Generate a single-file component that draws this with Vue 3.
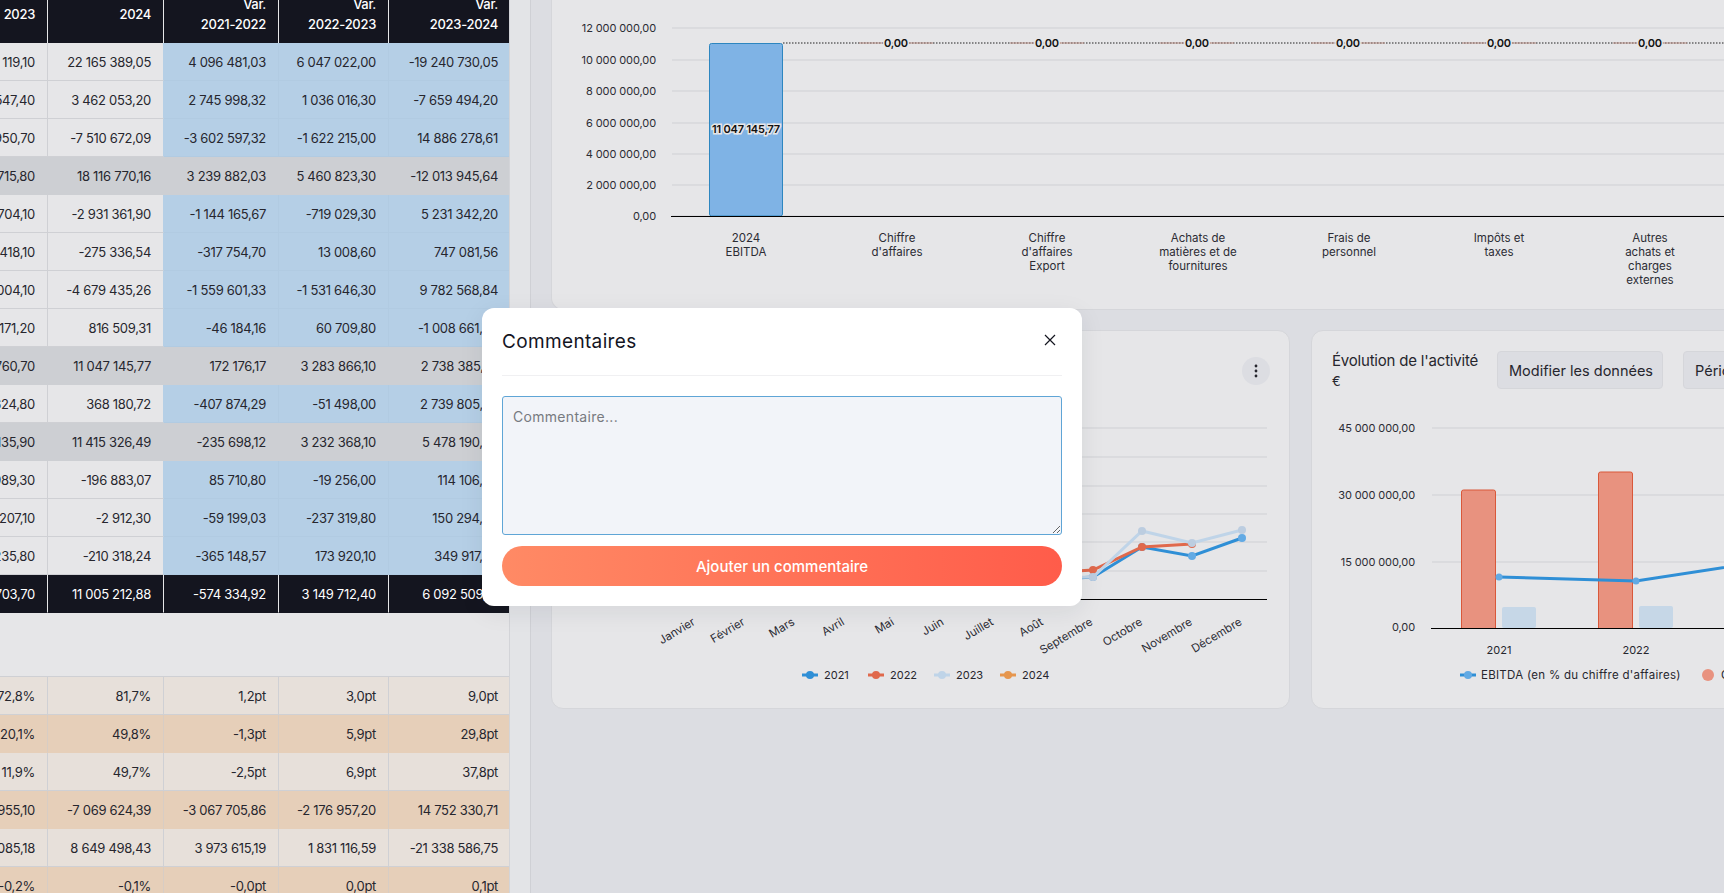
<script setup>
// lignes du tableau : 2023, 2024, var. 21-22, var. 22-23, var. 23-24
const mainRows = [
  { type: 'line', cells: ['41 406 119,10', '22 165 389,05', '4 096 481,03', '6 047 022,00', '-19 240 730,05'] },
  { type: 'line', cells: ['11 121 547,40', '3 462 053,20', '2 745 998,32', '1 036 016,30', '-7 659 494,20'] },
  { type: 'line', cells: ['-22 396 950,70', '-7 510 672,09', '-3 602 597,32', '-1 622 215,00', '14 886 278,61'] },
  { type: 'total', cells: ['30 130 715,80', '18 116 770,16', '3 239 882,03', '5 460 823,30', '-12 013 945,64'] },
  { type: 'line', cells: ['-8 162 704,10', '-2 931 361,90', '-1 144 165,67', '-719 029,30', '5 231 342,20'] },
  { type: 'line', cells: ['-1 022 418,10', '-275 336,54', '-317 754,70', '13 008,60', '747 081,56'] },
  { type: 'line', cells: ['-14 462 004,10', '-4 679 435,26', '-1 559 601,33', '-1 531 646,30', '9 782 568,84'] },
  { type: 'line', cells: ['1 825 171,20', '816 509,31', '-46 184,16', '60 709,80', '-1 008 661,89'] },
  { type: 'total', cells: ['8 308 760,70', '11 047 145,77', '172 176,17', '3 283 866,10', '2 738 385,07'] },
  { type: 'line', cells: ['-2 371 624,80', '368 180,72', '-407 874,29', '-51 498,00', '2 739 805,52'] },
  { type: 'total', cells: ['5 937 135,90', '11 415 326,49', '-235 698,12', '3 232 368,10', '5 478 190,59'] },
  { type: 'line', cells: ['-310 989,30', '-196 883,07', '85 710,80', '-19 256,00', '114 106,23'] },
  { type: 'line', cells: ['-153 207,10', '-2 912,30', '-59 199,03', '-237 319,80', '150 294,80'] },
  { type: 'line', cells: ['-560 235,80', '-210 318,24', '-365 148,57', '173 920,10', '349 917,56'] },
  { type: 'result', cells: ['4 912 703,70', '11 005 212,88', '-574 334,92', '3 149 712,40', '6 092 509,18'] }
]

const ratioRows = [
  ['72,8%', '81,7%', '1,2pt', '3,0pt', '9,0pt'],
  ['20,1%', '49,8%', '-1,3pt', '5,9pt', '29,8pt'],
  ['11,9%', '49,7%', '-2,5pt', '6,9pt', '37,8pt'],
  ['-21 821 955,10', '-7 069 624,39', '-3 067 705,86', '-2 176 957,20', '14 752 330,71'],
  ['29 988 085,18', '8 649 498,43', '3 973 615,19', '1 831 116,59', '-21 338 586,75'],
  ['-0,2%', '-0,1%', '-0,0pt', '0,0pt', '0,1pt']
]

// graphique du haut
const topGrid = [
  { y: 28, label: '12 000 000,00' },
  { y: 60, label: '10 000 000,00' },
  { y: 91, label: '8 000 000,00' },
  { y: 123, label: '6 000 000,00' },
  { y: 154, label: '4 000 000,00' },
  { y: 185, label: '2 000 000,00' },
  { y: 216, label: '0,00' }
]
const zeroLabels = [896, 1047, 1197, 1348, 1499, 1650]
const topCategories = [
  { x: 746, lines: ['2024', 'EBITDA'] },
  { x: 897, lines: ['Chiffre', "d'affaires"] },
  { x: 1047, lines: ['Chiffre', "d'affaires", 'Export'] },
  { x: 1198, lines: ['Achats de', 'matières et de', 'fournitures'] },
  { x: 1349, lines: ['Frais de', 'personnel'] },
  { x: 1499, lines: ['Impôts et', 'taxes'] },
  { x: 1650, lines: ['Autres', 'achats et', 'charges', 'externes'] }
]

// courbes mensuelles
const monthGrid = [428, 457, 486, 514, 542, 571]
const months = ['Janvier', 'Février', 'Mars', 'Avril', 'Mai', 'Juin', 'Juillet', 'Août', 'Septembre', 'Octobre', 'Novembre', 'Décembre']
const monthX = (i) => 696 + i * 49.7
const monthLines = [
  { color: '#2f8fd6', dot: '#62aae4', width: 3, points: [[1043, 580], [1093, 577], [1142, 547], [1192, 556], [1242, 538]] },
  { color: '#e0694c', dot: '#e0694c', width: 3, points: [[1043, 573], [1093, 570], [1142, 547], [1192, 544]] },
  { color: '#bfd4e8', dot: '#bccde0', width: 3, points: [[1043, 578], [1093, 577], [1142, 531], [1192, 543], [1242, 530]] }
]
const monthLegend = [
  { x: 810, color: '#2f8fd6', label: '2021' },
  { x: 876, color: '#e0694c', label: '2022' },
  { x: 942, color: '#bfd4e8', label: '2023' },
  { x: 1008, color: '#e6964e', label: '2024' }
]
const toPolyline = (points) => points.map((p) => p.join(',')).join(' ')

// évolution de l'activité
const activityGrid = [
  { y: 428, label: '45 000 000,00' },
  { y: 495, label: '30 000 000,00' },
  { y: 562, label: '15 000 000,00' }
]
const activityYears = [
  { label: '2021', x: 1499, redTop: 490, blueTop: 607 },
  { label: '2022', x: 1636, redTop: 472, blueTop: 606 }
]
</script>

<template>
  <div class="page">
    <!-- colonne du tableau, décalée comme après un défilement -->
    <section class="left">
      <div class="table-panel">
        <table class="grid head-table">
          <colgroup>
            <col class="c0" /><col class="c1" /><col class="c2" /><col class="c3" /><col class="c4" />
          </colgroup>
          <thead>
            <tr>
              <th>2023</th>
              <th>2024</th>
              <th>Var.<br />2021-2022</th>
              <th>Var.<br />2022-2023</th>
              <th>Var.<br />2023-2024</th>
            </tr>
          </thead>
          <tbody>
            <tr v-for="(row, i) in mainRows" :key="i" :class="row.type">
              <td v-for="(cell, j) in row.cells" :key="j">{{ cell }}</td>
            </tr>
          </tbody>
        </table>

        <table class="grid ratio-table">
          <colgroup>
            <col class="c0" /><col class="c1" /><col class="c2" /><col class="c3" /><col class="c4" />
          </colgroup>
          <tbody>
            <tr v-for="(row, i) in ratioRows" :key="i" :class="i % 2 ? 'tan-dark' : 'tan-light'">
              <td v-for="(cell, j) in row" :key="j">{{ cell }}</td>
            </tr>
          </tbody>
        </table>
      </div>
    </section>

    <section class="dash">
      <div class="card top-card">
        <svg class="chart" width="1172" height="309" viewBox="552 0 1172 309">
          <g v-for="g in topGrid" :key="g.y">
            <line class="grid-line" x1="672" :x2="1724" :y1="g.y" :y2="g.y" />
            <text class="tick" x="656" :y="g.y + 4" text-anchor="end">{{ g.label }}</text>
          </g>
          <line x1="783" x2="1724" y1="43" y2="43" stroke="#222" stroke-dasharray="1.5 1.5" />
          <line
            v-for="x in zeroLabels"
            :key="x"
            :x1="x - 37"
            :x2="x + 37"
            y1="43"
            y2="43"
            stroke="#b98f86"
          />
          <rect x="709.5" y="43.5" width="73" height="172.5" rx="2" fill="#7fb3e5" stroke="#2d86c0" />
          <line x1="671" x2="1724" y1="216.5" y2="216.5" stroke="#000" stroke-width="1.2" />
          <text class="value" x="746" y="133" text-anchor="middle">11 047 145,77</text>
          <text v-for="x in zeroLabels" :key="x" class="value" :x="x" y="47" text-anchor="middle">0,00</text>
          <g v-for="c in topCategories" :key="c.x">
            <text
              v-for="(line, i) in c.lines"
              :key="i"
              class="cat"
              :x="c.x"
              :y="242 + i * 14"
              text-anchor="middle"
            >{{ line }}</text>
          </g>
        </svg>
      </div>

      <div class="bottom-row">
        <div class="card month-card">
          <div class="card-head">
            <span class="card-title">Évolution mensuelle</span>
            <button class="kebab" aria-label="Options">
              <svg width="4" height="14" viewBox="0 0 4 14">
                <circle cx="2" cy="2" r="1.4" />
                <circle cx="2" cy="7" r="1.4" />
                <circle cx="2" cy="12" r="1.4" />
              </svg>
            </button>
          </div>
          <svg class="chart" width="737" height="299" viewBox="552 410 737 299">
            <line
              v-for="y in monthGrid"
              :key="y"
              class="grid-line"
              x1="640"
              x2="1267"
              :y1="y"
              :y2="y"
            />
            <line x1="640" x2="1267" y1="599.5" y2="599.5" stroke="#000" stroke-width="1.2" />
            <g v-for="(serie, i) in monthLines" :key="i">
              <polyline :points="toPolyline(serie.points)" fill="none" :stroke="serie.color" :stroke-width="serie.width" />
              <circle v-for="p in serie.points" :key="p[0]" :cx="p[0]" :cy="p[1]" r="4" :fill="serie.dot" />
            </g>
            <text
              v-for="(m, i) in months"
              :key="m"
              class="cat"
              text-anchor="end"
              :transform="`translate(${monthX(i)} 624) rotate(-31)`"
            >{{ m }}</text>
            <g v-for="l in monthLegend" :key="l.label">
              <line :x1="l.x - 8" :x2="l.x + 8" y1="675" y2="675" :stroke="l.color" stroke-width="3" />
              <circle :cx="l.x" cy="675" r="4" :fill="l.color" />
              <text class="legend" :x="l.x + 14" y="679">{{ l.label }}</text>
            </g>
          </svg>
        </div>

        <div class="card activity-card">
          <div class="card-head activity-head">
            <div class="activity-title">
              <span>Évolution de l'activité</span>
              <span class="unit">€</span>
            </div>
            <button class="ghost-btn">Modifier les données</button>
            <button class="ghost-btn">Périodes</button>
          </div>
          <svg class="chart" width="600" height="299" viewBox="1312 410 600 299">
            <g v-for="g in activityGrid" :key="g.y">
              <line class="grid-line" x1="1432" x2="1912" :y1="g.y" :y2="g.y" />
              <text class="tick" x="1415" :y="g.y + 4" text-anchor="end">{{ g.label }}</text>
            </g>
            <text class="tick" x="1415" y="631" text-anchor="end">0,00</text>
            <g v-for="yr in activityYears" :key="yr.label">
              <path
                :d="`M${yr.x - 37.5} 628V${yr.redTop + 2}q0-2 2-2h30q2 0 2 2V628`"
                fill="#e8927f"
                stroke="#d9583a"
              />
              <rect :x="yr.x + 3" :y="yr.blueTop" width="34" :height="628 - yr.blueTop" rx="2" fill="#c6d7e7" />
              <text class="legend" :x="yr.x" y="654" text-anchor="middle">{{ yr.label }}</text>
            </g>
            <line x1="1431" x2="1912" y1="628.5" y2="628.5" stroke="#000" stroke-width="1.2" />
            <polyline points="1499,577 1636,581 1773,560" fill="none" stroke="#2f8fd6" stroke-width="3" />
            <circle cx="1499" cy="577" r="3.5" fill="#62aae4" />
            <circle cx="1636" cy="581" r="3.5" fill="#62aae4" />
            <line x1="1460" x2="1476" y1="675" y2="675" stroke="#2f8fd6" stroke-width="3" />
            <circle cx="1468" cy="675" r="4" fill="#62aae4" />
            <text class="legend wide" x="1481" y="679">EBITDA (en % du chiffre d'affaires)</text>
            <circle cx="1708" cy="675" r="6" fill="#e8927f" />
            <text class="legend wide" x="1721" y="679">Chiffre d'affaires</text>
          </svg>
        </div>
      </div>
    </section>

    <!-- fenêtre de commentaires -->
    <div class="modal">
      <header class="modal-head">
        <h2>Commentaires</h2>
        <button class="close" aria-label="Fermer">
          <svg width="12" height="12" viewBox="0 0 12 12">
            <path d="M1 1l10 10M11 1L1 11" stroke="#14151f" stroke-width="1.2" fill="none" />
          </svg>
        </button>
      </header>
      <textarea class="comment" placeholder="Commentaire..."></textarea>
      <button class="submit">Ajouter un commentaire</button>
    </div>
  </div>
</template>

<style>
html,
body {
  margin: 0;
  overflow: hidden;
}
</style>

<style scoped>
.page {
  position: relative;
  display: flex;
  width: 1724px;
  height: 893px;
  overflow: hidden;
  background: #dcdde2;
  color: #26262e;
  font-family: Inter, "Liberation Sans", sans-serif;
}

/* tableau */
.left {
  flex: none;
  width: 531px;
  height: 100%;
  box-sizing: border-box;
  border-right: 1px solid #cfd0d5;
  background: #e3e4e7;
  overflow: hidden;
}
.table-panel {
  width: 509px;
  height: 100%;
  background: #e6e6e8;
  border-right: 1px solid #d3d4d8;
  box-sizing: content-box;
  overflow: hidden;
}
.grid {
  border-collapse: separate;
  border-spacing: 0;
  table-layout: fixed;
  width: 578px;
  margin-left: -68px;
  font-size: 13px;
  letter-spacing: -0.3px;
}
.head-table {
  margin-top: -15px;
}
.ratio-table {
  margin-top: 63px;
  border-top: 1px solid #cfd0d4;
}
.c0 { width: 116px; }
.c1 { width: 116px; }
.c2 { width: 115px; }
.c3 { width: 110px; }
.c4 { width: 121px; }
th,
td {
  box-sizing: border-box;
  padding: 0 12px 0 0;
  text-align: right;
  white-space: nowrap;
  overflow: hidden;
}
th {
  height: 58px;
  background: #14151f;
  color: #fff;
  font-weight: 500;
  line-height: 20px;
  border-right: 1px solid #e6e6e8;
}
th:last-child {
  border-right: none;
}
td {
  height: 38px;
  border-right: 1px solid #cfd0d4;
  border-bottom: 1px solid #cfd0d4;
}
td:last-child {
  border-right: none;
}
.line td:nth-child(n + 3) {
  background: #b5cfe6;
  border-color: #b1cbe2;
}
.line td:nth-child(2) {
  border-right-color: #b5cfe6;
}
.total td {
  background: #cdcfd3;
  border-color: #cdcfd3;
}
.result td {
  background: #14151f;
  color: #fff;
  border-bottom-color: #14151f;
  border-right-color: #e6e6e8;
}
.result td:last-child {
  border-right: none;
}
.tan-light td {
  background: #e7e0da;
}
.tan-dark td {
  background: #e6cfb9;
  border-color: #e6cfb9 #d8cdc4 #e6cfb9 #e6cfb9;
}

/* cartes */
.dash {
  flex: none;
  display: flex;
  flex-direction: column;
  gap: 20px;
  padding-left: 20px;
  width: 1193px;
  box-sizing: border-box;
}
.card {
  flex: none;
  box-sizing: border-box;
  border: 1px solid #d5d6da;
  border-radius: 12px;
  background: #e6e6e8;
  overflow: hidden;
}
.top-card {
  width: 1300px;
  height: 310px;
  border-top: none;
  border-top-left-radius: 0;
  border-top-right-radius: 0;
}
.chart {
  display: block;
  flex: none;
}
.bottom-row {
  display: flex;
  gap: 21px;
  height: 379px;
}
.month-card {
  width: 739px;
}
.activity-card {
  width: 700px;
}
.card-head {
  display: flex;
  align-items: center;
  justify-content: space-between;
  box-sizing: border-box;
  height: 79px;
  padding: 0 19px 0 20px;
}
.card-title {
  font-size: 14px;
}
.kebab {
  display: flex;
  align-items: center;
  justify-content: center;
  width: 28px;
  height: 28px;
  padding: 0;
  border: none;
  border-radius: 50%;
  background: #dcdde2;
  fill: #26262e;
}
.activity-head {
  justify-content: flex-start;
  align-items: flex-start;
  padding: 20px 0 0 20px;
}
.activity-title {
  display: flex;
  flex-direction: column;
  width: 165px;
  flex: none;
  font-size: 15px;
  line-height: 20px;
  letter-spacing: -0.2px;
}
.unit {
  font-size: 13px;
}
.ghost-btn {
  flex: none;
  width: 166px;
  height: 38px;
  margin-right: 20px;
  padding: 0 11px;
  border: 1px solid #d5d6da;
  border-radius: 4px;
  background: #dcdde2;
  color: #26262e;
  font: 400 14.5px Inter, "Liberation Sans", sans-serif;
  text-align: left;
  white-space: nowrap;
}

/* textes svg */
.grid-line {
  stroke: #cfd0d4;
}
.tick {
  font-size: 11px;
  fill: #2c2c34;
  letter-spacing: -0.1px;
}
.cat {
  font-size: 11.5px;
  fill: #2c2c34;
}
.value {
  font-size: 11px;
  font-weight: 600;
  fill: #111;
  letter-spacing: -0.2px;
  paint-order: stroke;
  stroke: #e6e6e8;
  stroke-width: 3px;
}
.legend {
  font-size: 11px;
  fill: #26262e;
}
.wide {
  font-size: 11.5px;
  letter-spacing: 0.28px;
}

/* modale */
.modal {
  position: absolute;
  left: 482px;
  top: 308px;
  display: flex;
  flex-direction: column;
  box-sizing: border-box;
  width: 600px;
  height: 298px;
  padding: 0 20px 20px;
  border-radius: 12px;
  background: #fff;
  box-shadow: 0 6px 24px rgba(30, 32, 45, 0.08);
}
.modal-head {
  display: flex;
  align-items: center;
  justify-content: space-between;
  flex: none;
  height: 68px;
  box-sizing: border-box;
  border-bottom: 1px solid #f0f0f2;
}
.modal-head h2 {
  margin: 0;
  color: #14151f;
  font-size: 19px;
  font-weight: 400;
  letter-spacing: 0.35px;
}
.close {
  display: flex;
  margin-right: 6px;
  margin-top: -4px;
  padding: 0;
  border: none;
  background: none;
}
.comment {
  flex: none;
  display: block;
  box-sizing: border-box;
  height: 139px;
  margin-top: 20px;
  padding: 11px 10px;
  border: 1px solid #5fa5d6;
  border-radius: 3px;
  outline: none;
  background: #f2f4f9;
  color: #26262e;
  font: 400 14px Inter, "Liberation Sans", sans-serif;
  letter-spacing: 0.3px;
}
.comment::placeholder {
  color: #777a80;
}
.submit {
  flex: none;
  height: 40px;
  margin-top: 11px;
  border: none;
  border-radius: 20px;
  background: linear-gradient(90deg, #ff8a65, #ff5c4a);
  color: #fff;
  font: 500 15px Inter, "Liberation Sans", sans-serif;
}
</style>
